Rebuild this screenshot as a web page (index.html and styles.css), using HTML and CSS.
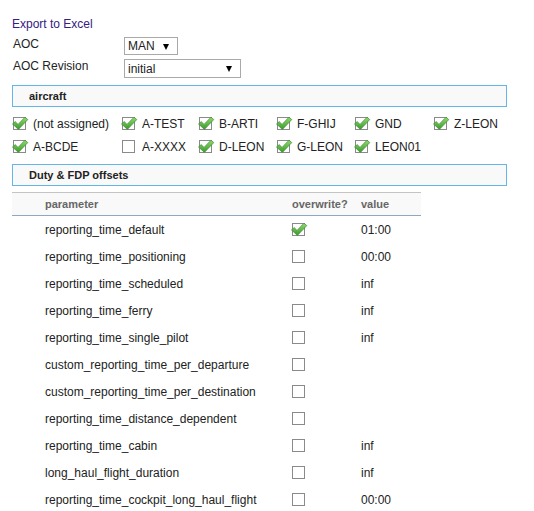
FILE: index.html
```html
<!DOCTYPE html>
<html lang="en">
<head>
  <meta charset="UTF-8" />
  <title>AOC settings</title>
  <link rel="stylesheet" href="styles.css">
</head>
<body>

  <!-- shared checkbox drawings -->
  <svg class="defs" width="0" height="0">
    <defs>
      <linearGradient id="tickGreen" x1="0" y1="0" x2="0" y2="1">
        <stop offset="0" stop-color="#8fdc6a" />
        <stop offset="1" stop-color="#3a9a2c" />
      </linearGradient>
      <g id="cb-off">
        <rect x="0.5" y="0.5" width="12" height="12" fill="#fff" stroke="#8a8a8a" />
      </g>
      <g id="cb-on">
        <rect x="0.5" y="0.5" width="12" height="12" fill="#fff" stroke="#8a8a8a" />
        <path d="M-0.5 7 L2.2 4.6 L5 7.4 L12 0.2 L14.8 2.6 L5.4 12.4 Z" fill="url(#tickGreen)" stroke="#3f8a33" stroke-width="0.7" stroke-linejoin="round" />
      </g>
    </defs>
  </svg>

  <div class="page">
    <a href="#" class="export">Export to Excel</a>

    <div class="form">
      <label>AOC</label>
      <span class="select small">
        <select><option>MAN</option></select>
      </span>
      <label>AOC Revision</label>
      <span class="select wide">
        <select><option>initial</option></select>
      </span>
    </div>

    <div class="panel">aircraft</div>

    <div class="aircraft-list">
      <label class="ac"><svg class="cb"><use href="#cb-on"/></svg>(not assigned)</label>
      <label class="ac"><svg class="cb"><use href="#cb-on"/></svg>A-TEST</label>
      <label class="ac"><svg class="cb"><use href="#cb-on"/></svg>B-ARTI</label>
      <label class="ac"><svg class="cb"><use href="#cb-on"/></svg>F-GHIJ</label>
      <label class="ac"><svg class="cb"><use href="#cb-on"/></svg>GND</label>
      <label class="ac"><svg class="cb"><use href="#cb-on"/></svg>Z-LEON</label>
      <label class="ac"><svg class="cb"><use href="#cb-on"/></svg>A-BCDE</label>
      <label class="ac"><svg class="cb"><use href="#cb-off"/></svg>A-XXXX</label>
      <label class="ac"><svg class="cb"><use href="#cb-on"/></svg>D-LEON</label>
      <label class="ac"><svg class="cb"><use href="#cb-on"/></svg>G-LEON</label>
      <label class="ac"><svg class="cb"><use href="#cb-on"/></svg>LEON01</label>
    </div>

    <div class="panel">Duty &amp; FDP offsets</div>

    <table class="offsets">
      <colgroup>
        <col class="c-param">
        <col class="c-over">
        <col class="c-value">
      </colgroup>
      <thead>
        <tr>
          <th>parameter</th>
          <th>overwrite?</th>
          <th>value</th>
        </tr>
      </thead>
      <tbody>
        <tr><td>reporting_time_default</td><td><svg class="cb"><use href="#cb-on"/></svg></td><td>01:00</td></tr>
        <tr><td>reporting_time_positioning</td><td><svg class="cb"><use href="#cb-off"/></svg></td><td>00:00</td></tr>
        <tr><td>reporting_time_scheduled</td><td><svg class="cb"><use href="#cb-off"/></svg></td><td>inf</td></tr>
        <tr><td>reporting_time_ferry</td><td><svg class="cb"><use href="#cb-off"/></svg></td><td>inf</td></tr>
        <tr><td>reporting_time_single_pilot</td><td><svg class="cb"><use href="#cb-off"/></svg></td><td>inf</td></tr>
        <tr><td>custom_reporting_time_per_departure</td><td><svg class="cb"><use href="#cb-off"/></svg></td><td></td></tr>
        <tr><td>custom_reporting_time_per_destination</td><td><svg class="cb"><use href="#cb-off"/></svg></td><td></td></tr>
        <tr><td>reporting_time_distance_dependent</td><td><svg class="cb"><use href="#cb-off"/></svg></td><td></td></tr>
        <tr><td>reporting_time_cabin</td><td><svg class="cb"><use href="#cb-off"/></svg></td><td>inf</td></tr>
        <tr><td>long_haul_flight_duration</td><td><svg class="cb"><use href="#cb-off"/></svg></td><td>inf</td></tr>
        <tr><td>reporting_time_cockpit_long_haul_flight</td><td><svg class="cb"><use href="#cb-off"/></svg></td><td>00:00</td></tr>
      </tbody>
    </table>
  </div>

</body>
</html>
```

FILE: styles.css
```css
body {
  font-family: 'Liberation Sans', Arial, sans-serif;
  font-size: 12px;
  line-height: 14px;
  margin: 0;
  color: #222;
  background: #fff;
}

.defs {
  position: absolute;
}

.page {
  padding: 17px 0 0 12px;
}

.export {
  display: block;
  color: #35207f;
  text-decoration: none;
}

.form {
  display: grid;
  grid-template-columns: 112px auto;
  justify-content: start;
  align-items: start;
  row-gap: 4px;
  margin: 6px 0 7px;
}

.form label {
  padding-left: 1px;
}

.select {
  position: relative;
  display: inline-block;
  height: 18px;
  border: 1px solid #a9a9a9;
  box-sizing: border-box;
  background: #fff;
}

.select.small {
  width: 54px;
}

.select.wide {
  width: 117px;
  height: 19px;
}

.select select {
  appearance: none;
  -webkit-appearance: none;
  border: none;
  background: transparent;
  font: inherit;
  color: #222;
  width: 100%;
  height: 100%;
  padding: 0 0 0 3px;
  margin: 0;
}

.select::after {
  content: "";
  position: absolute;
  top: 6px;
  right: 8px;
  border-left: 3.5px solid transparent;
  border-right: 3.5px solid transparent;
  border-top: 6px solid #000;
}

.panel {
  width: 495px;
  height: 22px;
  box-sizing: border-box;
  border: 1px solid #63b6e6;
  background: #f9f9f9;
  font-size: 11px;
  font-weight: bold;
  line-height: 20px;
  padding-left: 16px;
}

.aircraft-list {
  display: grid;
  grid-template-columns: 109px 77px 78px 78px 79px auto;
  grid-auto-rows: 23px;
  margin: 5px 0 6px;
}

.ac {
  display: flex;
  align-items: center;
  gap: 7px;
  padding-left: 1px;
  white-space: nowrap;
}

.cb {
  width: 13px;
  height: 13px;
  overflow: visible;
  flex: none;
  display: block;
}

.offsets {
  width: 409px;
  table-layout: fixed;
  border-collapse: collapse;
  margin-top: 6px;
}

.c-param { width: 280px; }
.c-over { width: 69px; }
.c-value { width: 60px; }

.offsets th {
  height: 22px;
  text-align: left;
  font-size: 11px;
  font-weight: bold;
  color: #666;
  background: #f9f9f9;
  border-top: 1px solid #c4c4c4;
  border-bottom: 1px solid #8ea7c6;
  padding: 0;
}

.offsets td {
  height: 27px;
  padding: 0;
}

.offsets th:first-child,
.offsets td:first-child {
  padding-left: 33px;
}
```
